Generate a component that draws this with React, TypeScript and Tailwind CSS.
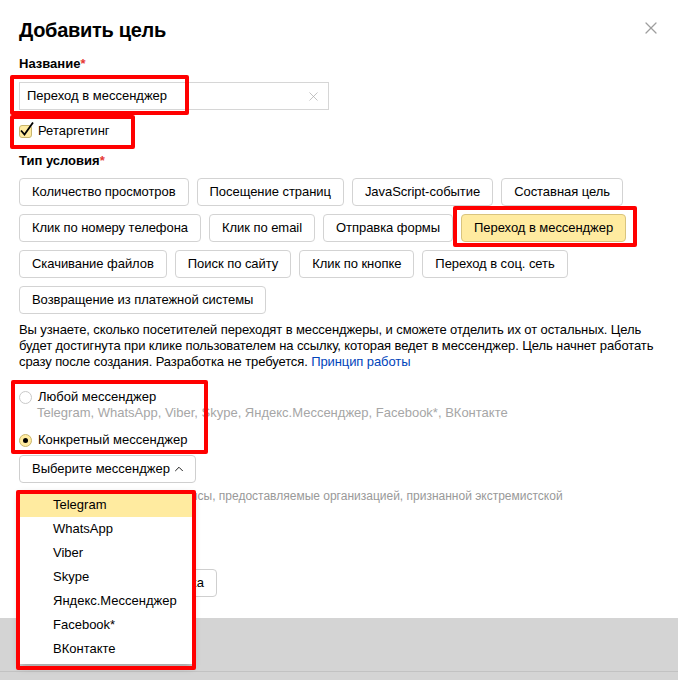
import { X, ChevronUp } from 'lucide-react'

const rows = [
  ['Количество просмотров', 'Посещение страниц', 'JavaScript-событие', 'Составная цель'],
  ['Клик по номеру телефона', 'Клик по email', 'Отправка формы', 'Переход в мессенджер'],
  ['Скачивание файлов', 'Поиск по сайту', 'Клик по кнопке', 'Переход в соц. сеть'],
  ['Возвращение из платежной системы'],
]

const messengers = ['Telegram', 'WhatsApp', 'Viber', 'Skype', 'Яндекс.Мессенджер', 'Facebook*', 'ВКонтакте']

function Red({ className }: { className: string }) {
  return <div className={`pointer-events-none absolute border-[4px] border-[#ff0000] rounded-[2px] ${className}`} />
}

export default function App() {
  const selected = 'Переход в мессенджер'
  return (
    <div className="relative w-[678px] h-[680px] overflow-hidden bg-white text-[13px] text-black font-['Liberation_Sans',Arial,sans-serif] flex flex-col">
      <div className="flex-1 px-[19px] pt-[18px]">
        <div className="flex items-center justify-between">
          <h1 className="text-[20px] leading-[24px] font-bold tracking-[-0.3px]">Добавить цель</h1>
          <X size={20} strokeWidth={1.5} className="text-[#9e9e9e] mr-[-2px] mt-[-4px]" />
        </div>

        <div className="mt-[14px] leading-[16px] font-bold">
          Название<span className="text-[#e53935]">*</span>
        </div>
        <div className="mt-[10px] w-[310px] h-[28px] border border-[#d6d6d6] flex items-center pl-[7px] pr-[7px]">
          <span className="flex-1">Переход в мессенджер</span>
          <X size={15} strokeWidth={1.1} className="text-[#a8a8a8]" />
        </div>

        <div className="mt-[13px] h-[16px] flex items-center gap-[6px]">
          <span className="relative w-[13px] h-[13px] rounded-[3px] bg-[#ffeba0] border border-[#c8b56e]">
            <svg viewBox="0 0 16 16" className="absolute left-[-1px] top-[-5px] w-[16px] h-[16px]">
              <path d="M2 9.5 L5.5 13.5 L14 1.5" fill="none" stroke="#000" strokeWidth="1.8" />
            </svg>
          </span>
          <span>Ретаргетинг</span>
        </div>

        <div className="mt-[14px] leading-[16px] font-bold">
          Тип условия<span className="text-[#e53935]">*</span>
        </div>
        <div className="mt-[9px] flex flex-col gap-[8px]">
          {rows.map((r, i) => (
            <div key={i} className="flex gap-[8px]">
              {r.map((b) => (
                <button
                  key={b}
                  className={`h-[28px] px-[12px] rounded-[4px] border text-[13px] tracking-[-0.05px] ${
                    b === selected ? 'bg-[#ffeba0] border-[#d9c47e]' : 'bg-white border-[#d3d3d3]'
                  }`}
                >
                  {b}
                </button>
              ))}
            </div>
          ))}
        </div>

        <p className="mt-[8px] leading-[16px] tracking-[-0.1px]">
          Вы узнаете, сколько посетителей переходят в мессенджеры, и сможете отделить их от остальных. Цель будет
          достигнута при клике пользователем на ссылку, которая ведет в мессенджер. Цель начнет работать сразу после
          создания. Разработка не требуется. <span className="text-[#04b]">Принцип работы</span>
        </p>

        <div className="mt-[19px] h-[16px] flex items-center gap-[6px]">
          <span className="w-[13px] h-[13px] rounded-full border border-[#c9c9c9] bg-white" />
          <span>Любой мессенджер</span>
        </div>
        <div className="leading-[16px] pl-[18px] text-[#a6a6a6]">
          Telegram, WhatsApp, Viber, Skype, Яндекс.Мессенджер, Facebook*, ВКонтакте
        </div>
        <div className="mt-[11px] h-[16px] flex items-center gap-[6px]">
          <span className="w-[13px] h-[13px] rounded-full border border-[#c8b56e] bg-[#ffeba0] flex items-center justify-center">
            <span className="w-[5px] h-[5px] rounded-full bg-black" />
          </span>
          <span>Конкретный мессенджер</span>
        </div>

        <button className="mt-[7px] h-[28px] pl-[12px] pr-[9px] rounded-[4px] border border-[#cfcfcf] flex items-center gap-[2px]">
          Выберите мессенджер
          <ChevronUp size={14} strokeWidth={1.5} />
        </button>

        <div className="mt-[5px] leading-[16px] text-[12px] text-[#999]">
          * Facebook и Instagram — сервисы, предоставляемые организацией, признанной экстремистской
        </div>

        <button className="mt-[65px] h-[28px] w-[198px] px-[12px] rounded-[4px] border border-[#cfcfcf] text-right">
          Дополнительная настройка
        </button>
      </div>

      <div className="h-[62px] bg-[#d4d4d4] flex flex-col">
        <div className="h-[54px] border-b border-[#c2c2c2]" />
      </div>

      <div className="absolute left-[20px] top-[493px] w-[172px] bg-white shadow-[0_2px_8px_rgba(0,0,0,0.3)] pb-[3px]">
        {messengers.map((m, i) => (
          <div key={m} className={`h-[24px] leading-[24px] pl-[33px] ${i === 0 ? 'bg-[#ffeba0]' : ''}`}>
            {m}
          </div>
        ))}
      </div>

      <Red className="left-[10px] top-[75px] w-[179px] h-[40px]" />
      <Red className="left-[10px] top-[115px] w-[125px] h-[34px]" />
      <Red className="left-[453px] top-[206px] w-[184px] h-[41px]" />
      <Red className="left-[11px] top-[380px] w-[197px] h-[74px]" />
      <Red className="left-[16px] top-[490px] w-[180px] h-[180px]" />
    </div>
  )
}
